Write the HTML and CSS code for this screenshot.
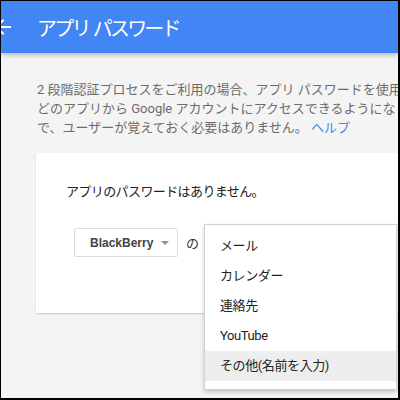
FILE: index.html
```
<!DOCTYPE html>
<html>

<head>
  <meta charset="utf-8">
  <title>アプリ パスワード</title>
  <link rel="stylesheet" href="styles.css">
</head>

<body>
  <div class="frame">
    <header class="appbar">
      <svg class="back" width="24" height="24" viewBox="0 0 24 24">
        <path d="M20 11H7.83l5.59-5.59L12 4l-8 8 8 8 1.41-1.41L7.83 13H20v-2z" fill="#ffffff" />
      </svg>
      <h1 class="title">アプリ パスワード</h1>
    </header>

    <div class="content">
      <p class="intro">
        2 段階認証プロセスをご利用の場合、アプリ パスワードを使用すると<br>
        どのアプリから Google アカウントにアクセスできるようになりますの<br>
        で、ユーザーが覚えておく必要はありません。 <a class="help" href="#">ヘルプ</a>
      </p>

      <div class="card">
        <p class="empty">アプリのパスワードはありません。</p>

        <div class="picker">
          <div class="select">BlackBerry <span class="caret"></span></div>
          <span class="joiner">の</span>

          <ul class="menu">
            <li>メール</li>
            <li>カレンダー</li>
            <li>連絡先</li>
            <li>YouTube</li>
            <li class="active">その他(名前を入力)</li>
          </ul>
        </div>
      </div>
    </div>
  </div>
</body>

</html>
```

FILE: styles.css
```
html,
body {
  margin: 0;
  padding: 0;
  background: #000000;
}

.frame {
  box-sizing: border-box;
  width: 400px;
  height: 400px;
  border-style: solid;
  border-color: #000000;
  border-width: 1px 2px 2px 1px;
  background: #f4f4f4;
  overflow: hidden;
  font-family: Roboto, "Noto Sans CJK JP", sans-serif;
}

.appbar {
  position: relative;
  z-index: 2;
  height: 52px;
  display: flex;
  align-items: center;
  background: #4285f4;
  box-shadow: 0 2px 5px rgba(0, 0, 0, 0.26);
}

.back {
  margin-left: -10px;
  margin-right: 22px;
  flex: none;
}

.title {
  margin: 0;
  color: #ffffff;
  font-weight: normal;
  font-size: 20px;
  letter-spacing: -2.8px;
  word-spacing: 2px;
  white-space: nowrap;
}

.content {
  padding: 27px 0 0 35px;
}

.intro {
  margin: 0 0 16px 1px;
  font-size: 13px;
  line-height: 19px;
  color: #6c6c6c;
  white-space: nowrap;
}

.help {
  color: #4285f4;
  text-decoration: none;
}

.card {
  width: 520px;
  padding: 29px 0 56px 30px;
  background: #ffffff;
  border-radius: 2px;
  box-shadow: 0 1px 2px rgba(0, 0, 0, 0.18);
}

.empty {
  margin: 0 0 26px 0;
  font-size: 13px;
  line-height: 20px;
  color: #222222;
  letter-spacing: -0.6px;
}

.picker {
  position: relative;
  display: flex;
  align-items: center;
  padding-left: 8px;
}

.select {
  box-sizing: border-box;
  width: 104px;
  height: 29px;
  display: flex;
  align-items: center;
  padding-left: 15px;
  border: 1px solid #dcdcdc;
  border-radius: 2px;
  background: #ffffff;
  font: bold 12px "Liberation Sans", Arial, sans-serif;
  color: #444444;
}

.caret {
  margin-left: 8px;
  width: 0;
  height: 0;
  border-left: 4px solid transparent;
  border-right: 4px solid transparent;
  border-top: 4px solid #909090;
}

.joiner {
  margin-left: 8px;
  font-size: 13px;
  color: #333333;
}

.menu {
  position: absolute;
  left: 138px;
  top: -4px;
  width: 193px;
  box-sizing: border-box;
  margin: 0;
  padding: 6px 0 8px 0;
  list-style: none;
  background: #ffffff;
  border: 1px solid rgba(0, 0, 0, 0.18);
  box-shadow: 0 2px 4px rgba(0, 0, 0, 0.2);
}

.menu li {
  height: 30px;
  line-height: 30px;
  padding-left: 15px;
  font-size: 13px;
  color: #222222;
  white-space: nowrap;
  letter-spacing: -0.4px;
}

.menu li.active {
  background: #eeeeee;
}
```
